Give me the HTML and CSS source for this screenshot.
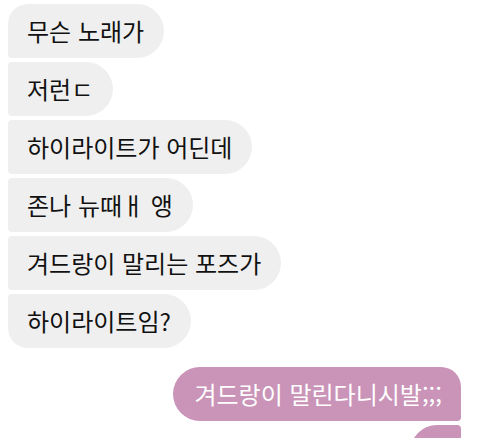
FILE: index.html
```html
<!DOCTYPE html>
<html lang="ko">
<head>
<meta charset="utf-8">
<link rel="stylesheet" href="styles.css">
</head>
<body>
<div class="chat">
  <div class="msg in first">무슨 노래가</div>
  <div class="msg in">저런ㄷ</div>
  <div class="msg in">하이라이트가 어딘데</div>
  <div class="msg in">존나 뉴때ㅐ 앵</div>
  <div class="msg in">겨드랑이 말리는 포즈가</div>
  <div class="msg in last">하이라이트임?</div>
  <div class="msg out first">겨드랑이 말린다니시발;;;</div>
  <div class="msg out stub"></div>
</div>
</body>
</html>
```
FILE: styles.css
```css
html, body {
  margin: 0;
  padding: 0;
  background: #ffffff;
  overflow: hidden;
}
.chat {
  display: flex;
  flex-direction: column;
  gap: 4px;
  padding: 4px 19px 0 8px;
  font-family: "Noto Sans CJK KR", "Noto Sans", sans-serif;
  font-size: 24px;
}
.msg {
  height: 54px;
  line-height: 54px;
  padding: 0 20px 0 19px;
  white-space: nowrap;
  box-sizing: border-box;
}
.in {
  align-self: flex-start;
  background: #efefef;
  color: #111111;
  border-radius: 4px 27px 27px 4px;
}
.in.first {
  border-top-left-radius: 20px;
}
.in.last {
  border-bottom-left-radius: 20px;
}
.out {
  align-self: flex-end;
  background: #c994b8;
  color: #ffffff;
  padding: 0 19px 0 21px;
  border-radius: 27px 4px 4px 27px;
}
.out.first {
  margin-top: 15px;
  border-top-right-radius: 20px;
}
.out.stub {
  width: 51px;
}
```
